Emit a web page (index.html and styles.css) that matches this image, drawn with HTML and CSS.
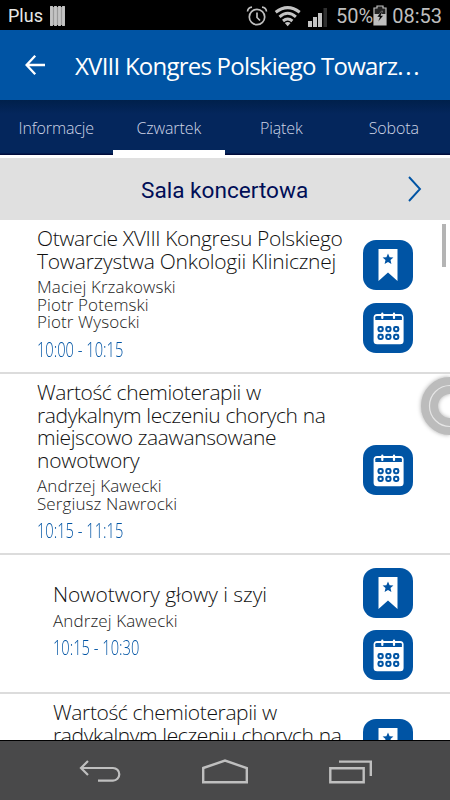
FILE: index.html
```html
<!DOCTYPE html>
<html lang="pl">

<head>
  <meta charset="UTF-8" />
  <meta name="viewport" content="width=device-width, initial-scale=1.0" />
  <title>XVIII Kongres</title>
  <link rel="stylesheet" href="styles.css">
</head>

<body>
  <!-- Shared icons -->
  <svg class="sprite">
    <symbol id="bookmark" viewBox="0 0 50 50">
      <path d="M15.5 9H34.5V41L25 32.6L15.5 41Z" fill="#fff" />
      <path d="M25 13.6L26.6 17.2L30.4 17.6L27.5 20.1L28.4 24L25 22L21.6 24L22.5 20.1L19.6 17.6L23.4 17.2Z" fill="#0054a4" />
    </symbol>
    <symbol id="calendar" viewBox="0 0 50 50">
      <rect x="10.6" y="11" width="30" height="30.3" rx="3.5" fill="#fff" />
      <path d="M12.3 17V14.3Q12.3 13 13.6 13H37.6Q38.9 13 38.9 14.3V17Z" fill="#0054a4" />
      <path d="M19.3 10.5V15M31 10.5V15" stroke="#fff" stroke-width="2.2" stroke-linecap="round" />
      <g fill="#fff" stroke="#0054a4" stroke-width="2.1">
        <rect x="15.5" y="24" width="4.2" height="4.2" rx="1.4" />
        <rect x="23.3" y="24" width="4.2" height="4.2" rx="1.4" />
        <rect x="31.1" y="24" width="4.2" height="4.2" rx="1.4" />
        <rect x="15.5" y="31.8" width="4.2" height="4.2" rx="1.4" />
        <rect x="23.3" y="31.8" width="4.2" height="4.2" rx="1.4" />
        <rect x="31.1" y="31.8" width="4.2" height="4.2" rx="1.4" />
      </g>
    </symbol>
  </svg>

  <div class="phone">
    <!-- Status bar -->
    <div class="status">
      <span class="carrier">Plus</span>
      <svg class="sim" width="16" height="20" viewBox="0 0 16 20">
        <path d="M0 1H15V19H0Z" fill="#9a9a9a" />
        <path d="M1.5 0V20M5.5 0V20M9.5 0V20M13.5 0V20" stroke="#c4c4c4" stroke-width="2.8" />
      </svg>
      <svg class="status-icons" width="84" height="22" viewBox="0 0 84 22">
        <g fill="none" stroke="#bebebe" stroke-width="1.7">
          <circle cx="11" cy="12" r="7.7" />
          <path d="M11 7.5V12.5L14 15.5M1.5 6.5Q2 2.5 6 2.2M20.5 6.5Q20 2.5 16 2.2" />
        </g>
        <g fill="none" stroke="#c4c4c4" stroke-width="3">
          <path d="M29.7 7.2Q41.7 -2 53.7 7.2" />
          <path d="M33.5 11.8Q41.7 4.8 49.9 11.8" />
          <path d="M37 16Q41.7 12 46.4 16" />
        </g>
        <path d="M38.8 18Q41.7 16 44.6 18L41.7 21.3Z" fill="#c4c4c4" />
        <path d="M62 16H66V22H62ZM67 12H71V22H67ZM72 8H76V22H72Z" fill="#c4c4c4" />
        <path d="M77.5 3H81V22H77.5Z" fill="#303030" />
      </svg>
      <span class="percent">50%</span>
      <svg class="battery" width="14" height="21" viewBox="0 0 14 21">
        <path d="M4 1H10V3H13V20H1V3H4Z" fill="#222" stroke="#bebebe" stroke-width="1.2" />
        <path d="M1 9H13V20H1Z" fill="#bebebe" />
        <path d="M8.5 6L4 12H6.6L5 17L10.5 10.5H7.8L9.5 6Z" fill="#000" stroke="#ddd" stroke-width="0.4" />
      </svg>
      <span class="clock">08:53</span>
    </div>

    <!-- App header -->
    <header class="header">
      <svg width="20" height="20" viewBox="0 0 20 20">
        <path d="M10.2 0.8L1.6 10L10.2 19.2M1.6 10H20" fill="none" stroke="#fff" stroke-width="2.3" />
      </svg>
      <h1>XVIII Kongres Polskiego Towarz<span class="dots">...</span></h1>
    </header>

    <nav class="tabs">
      <a class="tab"><span>Informacje</span></a>
      <a class="tab active"><span>Czwartek</span></a>
      <a class="tab"><span>Piątek</span></a>
      <a class="tab"><span>Sobota</span></a>
    </nav>

    <div class="room">
      <span>Sala koncertowa</span>
      <svg width="14" height="26" viewBox="0 0 14 26">
        <path d="M1 1L12 13L1 25" fill="none" stroke="#0054a4" stroke-width="1.9" />
      </svg>
    </div>

    <!-- Sessions -->
    <main class="list">
      <article class="item first">
        <div class="info">
          <h2>Otwarcie XVIII Kongresu Polskiego<br /><span class="loose">Towarzystwa Onkologii Klinicznej</span></h2>
          <p class="people">Maciej Krzakowski<br />Piotr Potemski<br />Piotr Wysocki</p>
          <p class="time">10:00 - 10:15</p>
        </div>
        <div class="actions">
          <svg class="btn"><use href="#bookmark" /></svg>
          <svg class="btn"><use href="#calendar" /></svg>
        </div>
      </article>

      <article class="item second">
        <div class="info">
          <h2>Wartość chemioterapii w<br />radykalnym leczeniu chorych na<br />miejscowo zaawansowane<br /><span class="loose">nowotwory</span></h2>
          <p class="people">Andrzej Kawecki<br />Sergiusz Nawrocki</p>
          <p class="time">10:15 - 11:15</p>
        </div>
        <div class="actions">
          <svg class="btn"><use href="#calendar" /></svg>
        </div>
      </article>

      <article class="item third">
        <div class="info">
          <h2>Nowotwory głowy i szyi</h2>
          <p class="people">Andrzej Kawecki</p>
          <p class="time">10:15 - 10:30</p>
        </div>
        <div class="actions">
          <svg class="btn"><use href="#bookmark" /></svg>
          <svg class="btn"><use href="#calendar" /></svg>
        </div>
      </article>

      <article class="item fourth">
        <div class="info">
          <h2>Wartość chemioterapii w<br />radykalnym leczeniu chorych na</h2>
        </div>
        <div class="actions">
          <svg class="btn"><use href="#bookmark" /></svg>
        </div>
      </article>

      <div class="scrollbar"></div>
      <!-- Floating assist button, half off screen -->
      <svg class="assist" width="30" height="62" viewBox="0 0 30 62">
        <circle cx="30" cy="31" r="20.5" fill="none" stroke="#bcbcbc" stroke-width="17" />
        <circle cx="30" cy="31" r="20.5" fill="none" stroke="#e6e6e6" stroke-width="1.2" />
      </svg>
    </main>

    <!-- System keys -->
    <footer class="keys">
      <svg width="42" height="26" viewBox="0 0 42 26">
        <path d="M9 2L2 9L9 16M2 9H34A6.3 6.3 0 0 1 34 21.6H19" fill="none" stroke="#bfbfbf" stroke-width="2.2" />
      </svg>
      <svg width="46" height="26" viewBox="0 0 46 26">
        <path d="M1.2 9L23 1.6L44.8 9V23.2H1.2Z" fill="none" stroke="#bfbfbf" stroke-width="2.4" />
      </svg>
      <svg width="44" height="26" viewBox="0 0 44 26">
        <path d="M1.3 9.2H34.7V23.2H1.3ZM10 2.6H41.8V17" fill="none" stroke="#bfbfbf" stroke-width="2.4" />
      </svg>
    </footer>
  </div>
</body>

</html>
```

FILE: styles.css
```css
body {
  margin: 0;
  padding: 0;
  background-color: #fff;
  font-family: "Open Sans", "Noto Sans", sans-serif;
}

h1, h2, p {
  margin: 0;
  font-weight: 300;
}

svg {
  display: block;
  flex: none;
}

.sprite {
  width: 0;
  height: 0;
  float: left;
}

.phone {
  width: 450px;
  height: 800px;
  display: flex;
  flex-direction: column;
  overflow: hidden;
}

/* Status bar */
.status {
  height: 30px;
  flex: none;
  display: flex;
  align-items: center;
  box-sizing: border-box;
  padding: 1px 8px 0 8px;
  background-color: #000;
  color: #bebebe;
  font-family: Roboto, sans-serif;
  font-size: 20px;
  white-space: nowrap;
}

.carrier {
  width: 42px;
  color: #e8e8e8;
  font-size: 18px;
}

.status-icons {
  margin-left: auto;
  margin-right: 6px;
}

.battery {
  margin-right: 5px;
}

/* Header */
.header {
  height: 70px;
  flex: none;
  display: flex;
  align-items: center;
  box-sizing: border-box;
  padding-left: 25px;
  background-color: #0054a4;
  color: #fff;
}

.header h1 {
  margin-left: 30px;
  font-size: 24px;
  font-weight: 400;
  letter-spacing: -0.77px;
  white-space: nowrap;
}

.header .dots {
  letter-spacing: 1.8px;
}

/* Tabs */
.tabs {
  height: 55px;
  flex: none;
  display: flex;
  background: linear-gradient(#00204b, #04265c 14px, #04265c 53px, #000c3c 54px);
}

.tab {
  width: 112.5px;
  height: 57px;
  box-sizing: border-box;
  color: #ced5e6;
  font-size: 16px;
  font-weight: 300;
  letter-spacing: -0.1px;
  line-height: 57px;
  text-align: center;
}

.tab.active {
  border-bottom: 7px solid #fff;
}

/* Room name */
.room {
  height: 62px;
  flex: none;
  display: flex;
  align-items: center;
  justify-content: space-between;
  box-sizing: border-box;
  margin-top: 3px;
  padding: 0 28px 0 141px;
  background-color: #e0e0e0;
  color: #000e57;
  font-family: Roboto, sans-serif;
  font-size: 22.6px;
}

.room span {
  padding-top: 2px;
}

/* Sessions */
.list {
  position: relative;
  height: 520px;
  flex: none;
  overflow: hidden;
}

.item {
  display: flex;
  justify-content: space-between;
  box-sizing: border-box;
  padding: 7px 37.5px 0 37px;
  border-bottom: 2px solid #dcdcdc;
  background-color: #fff;
}

.first {
  height: 154px;
}

.second {
  height: 181px;
}

.third {
  height: 139px;
  padding-left: 53px;
}

.fourth {
  height: 139px;
  padding-left: 53px;
}

.third .info {
  padding-top: 21px;
}

.info {
  white-space: nowrap;
}

h2 {
  color: #111;
  font-size: 21px;
  letter-spacing: -0.38px;
  line-height: 22.5px;
}

h2 .loose {
  letter-spacing: -0.24px;
}

.third h2 {
  letter-spacing: -0.05px;
}

.people {
  margin-top: 6px;
  color: #222;
  font-size: 17px;
  letter-spacing: 0.1px;
  line-height: 17.7px;
}

.time {
  margin-top: 5px;
  color: #0054a4;
  font-size: 20.5px;
  line-height: 26px;
  transform: scaleX(0.715);
  transform-origin: left;
}

.actions {
  display: flex;
  flex-direction: column;
  gap: 12.5px;
}

.first .actions {
  padding-top: 13px;
}

.second .actions {
  padding-top: 64px;
}

.third .actions {
  padding-top: 5.5px;
}

.fourth .actions {
  padding-top: 18px;
}

.btn {
  width: 50px;
  height: 50px;
  border-radius: 13px;
  background-color: #0054a4;
}

.scrollbar {
  position: absolute;
  top: 4px;
  right: 4px;
  width: 4.5px;
  height: 43px;
  background-color: #b4b4b4;
}

.assist {
  position: absolute;
  top: 155px;
  right: 0;
  filter: drop-shadow(0 0 2px #aaa);
}

/* System keys */
.keys {
  height: 60px;
  flex: none;
  display: flex;
  align-items: center;
  justify-content: space-between;
  box-sizing: border-box;
  padding: 3px 77px 0 79px;
  border-top: 1px solid #000;
  background-color: #49494a;
}
```
